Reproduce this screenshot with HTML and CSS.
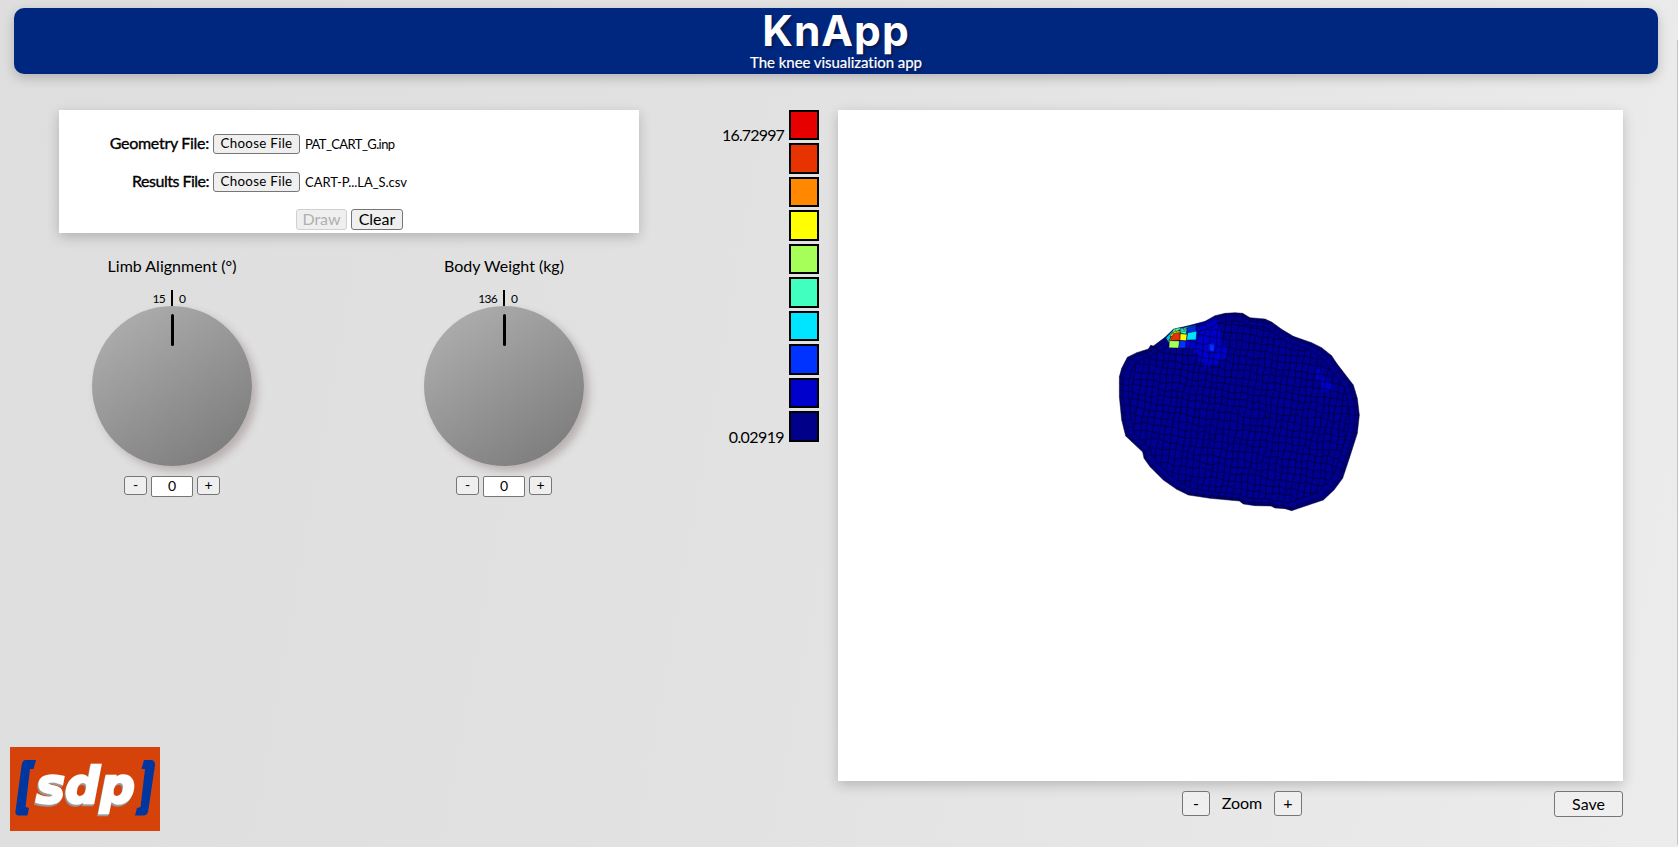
FILE: index.html
```html
<!DOCTYPE html>
<html lang="en">
<head>
<meta charset="utf-8">
<title>KnApp</title>
<link rel="stylesheet" href="styles.css">
</head>
<body>
<header class="header">
  <h1 class="title">KnApp</h1>
  <p class="subtitle">The knee visualization app</p>
</header>
<main class="main">
  <section class="controls">
    <form class="files">
      <div class="file-row"><label class="file-label label-a">Geometry File:</label><button type="button" class="btn choose">Choose File</button><span class="file-name name-a">PAT_CART_G.inp</span></div>
      <div class="file-row"><label class="file-label label-b">Results File:</label><button type="button" class="btn choose">Choose File</button><span class="file-name name-b">CART-P...LA_S.csv</span></div>
      <div class="actions"><button type="button" class="btn draw" disabled>Draw</button><button type="button" class="btn clear">Clear</button></div>
    </form>
    <div class="knobs">
      <div class="knob">
        <h2 class="knob-title">Limb Alignment (°)</h2>
        <div class="range"><span class="max">15</span><i class="tick"></i><span class="min">0</span></div>
        <div class="dial"><i class="pointer"></i></div>
        <div class="stepper"><button type="button" class="btn step">-</button><span class="value">0</span><button type="button" class="btn step">+</button></div>
      </div>
      <div class="knob">
        <h2 class="knob-title">Body Weight (kg)</h2>
        <div class="range"><span class="max">136</span><i class="tick"></i><span class="min">0</span></div>
        <div class="dial"><i class="pointer"></i></div>
        <div class="stepper"><button type="button" class="btn step">-</button><span class="value">0</span><button type="button" class="btn step">+</button></div>
      </div>
    </div>
  </section>
  <aside class="legend">
    <div class="bounds"><span class="upper">16.72997</span><span class="lower">0.02919</span></div>
    <div class="scale">
      <i class="swatch c1"></i><i class="swatch c2"></i><i class="swatch c3"></i><i class="swatch c4"></i><i class="swatch c5"></i><i class="swatch c6"></i><i class="swatch c7"></i><i class="swatch c8"></i><i class="swatch c9"></i><i class="swatch c10"></i>
    </div>
  </aside>
  <section class="viewer">
    <div class="canvas"><svg class="mesh" id="mesh" viewBox="0 0 780 660"></svg></div>
    <div class="toolbar"><button type="button" class="btn zoom">-</button><span class="zoom-label">Zoom</span><button type="button" class="btn zoom">+</button><button type="button" class="btn save">Save</button></div>
  </section>
</main>
<svg class="logo" viewBox="0 0 150 84">
  <rect width="150" height="84" fill="#d6430a"/>
  <path d="M15 13H26L23.5 22H20L15.500 60L19 61L17.500 68.500H8Q5 68 5.500 64L11.500 19Q12 14 15 13Z" fill="#0036a0"/>
  <path d="M134 13H142Q145 14 145 18L138.500 62Q138 68 134 68.500H125L127 61L130.500 60L135 22H131.500Z" fill="#0036a0"/>
  <text class="logo-shadow" x="25" y="57.500" textLength="99" lengthAdjust="spacingAndGlyphs">sdp</text>
  <text class="logo-text" x="26" y="56" textLength="99" lengthAdjust="spacingAndGlyphs">sdp</text>
</svg>
<i class="edge"></i>
<script src="mesh.js"></script>
</body>
</html>
```
FILE: styles.css
```css
* { box-sizing: border-box; }
html { height: 100%; }
body {
  margin: 0;
  padding: 8px 20px 0 14px;
  height: 847px;
  overflow: hidden;
  background: linear-gradient(100deg, #dedede 0%, #e2e2e2 48%, #ececec 100%);
  color: #000;
  font: 16px/20px Lato, sans-serif;
}
h1, h2, p { margin: 0; font-weight: 400; }
.header {
  height: 66px;
  border-radius: 10px;
  background: #002780;
  color: #fff;
  text-align: center;
  box-shadow: 0 4px 12px rgba(0, 0, 0, .2);
  text-shadow: 2px 2px 3px rgba(0, 0, 0, .35);
}
.title { font-family: Inter, sans-serif; font-size: 42.500px; line-height: 46px; font-weight: 700; letter-spacing: 1px; }
.subtitle { font-size: 15px; line-height: 16px; letter-spacing: -.05px; -webkit-text-stroke: .2px #fff; }
.main {
  display: grid;
  grid-template-columns: 580px 180px 785px;
  padding: 36px 0 0 45px;
}
.viewer { margin-left: 19px; width: 785px; }
.files {
  height: 123px;
  padding-top: 24px;
  background: #fff;
  box-shadow: 0 4px 12px rgba(0, 0, 0, .2);
}
.btn {
  padding: 0 0 1px;
  border: 1px solid #767676;
  border-radius: 3px;
  background: #efefef;
  color: #000;
  font: 16px/1 Lato, sans-serif;
}
.file-row { display: flex; align-items: center; height: 20px; margin-bottom: 18px; }
.file-label { width: 150px; margin-right: 4px; padding-bottom: 2px; text-align: right; -webkit-text-stroke: .35px #000; }
.label-a { letter-spacing: -.28px; }
.label-b { letter-spacing: -.5px; }
.choose { width: 87px; height: 20px; font-size: 13.330px; letter-spacing: .3px; }
.file-name { margin-left: 5px; padding-bottom: 1px; font-size: 13px; }
.name-a { letter-spacing: -.6px; }
.name-b { letter-spacing: -.05px; }
.actions { display: flex; gap: 4px; margin: -1px 0 0 237px; }
.draw { width: 51px; height: 21px; color: #b0b0b0; border-color: #d0d0d0; }
.clear { width: 52px; height: 21px; }
.knobs { display: flex; gap: 106px; padding-top: 23px; }
.knob { width: 226px; display: flex; flex-direction: column; align-items: center; }
.knob-title { font-size: 16px; line-height: 20px; }
.range { display: grid; grid-template-columns: 40px 2px 40px; column-gap: 6px; height: 14px; margin-top: 14px; font-size: 12px; line-height: 18px; }
.max { text-align: right; letter-spacing: -.7px; }
.tick { background: #000; }
.dial {
  width: 160px; height: 160px; margin-top: 2px; padding-top: 8px;
  border-radius: 50%;
  background: linear-gradient(145deg, #b3b3b3, #777);
  box-shadow: 5px 5px 9px #b9b0b0;
}
.pointer { display: block; width: 3px; height: 32px; margin: 0 auto; border-radius: 2px; background: #000; }
.stepper { display: flex; gap: 4px; margin-top: 10px; }
.step { width: 23px; height: 19px; font-size: 14px; }
.value { width: 42px; height: 21px; border: 1px solid #767676; border-radius: 2px; background: #fff; font-size: 14px; line-height: 18px; text-align: center; }
.legend { display: flex; justify-content: flex-end; gap: 5px; }
.bounds { display: flex; flex-direction: column; justify-content: space-between; height: 337px; padding-top: 15px; text-align: right; letter-spacing: -.85px; }
.lower { letter-spacing: -.6px; }
.scale { display: grid; grid-template-rows: repeat(10, 30.200px); row-gap: 3.300px; }
.swatch { width: 30px; border: 2px solid #000; }
.c1 { background: #e60000; }
.c2 { background: #e63300; }
.c3 { background: #ff8800; }
.c4 { background: #ffff00; }
.c5 { background: #a6ff59; }
.c6 { background: #40ffbf; }
.c7 { background: #00e5ff; }
.c8 { background: #0033ff; }
.c9 { background: #0000cc; }
.c10 { background: #000088; }
.canvas { height: 671px; padding: 190px 0 0 272px; background: #fff; box-shadow: 0 4px 12px rgba(0, 0, 0, .2); }
.mesh { display: block; width: 260px; height: 220px; }
.toolbar { display: flex; align-items: flex-start; padding: 10px 0 0 344px; }
.zoom { width: 28px; height: 25px; }
.zoom-label { width: 64px; line-height: 24px; text-align: center; }
.save { width: 69px; height: 26px; margin-left: auto; }
.logo { position: fixed; left: 10px; top: 747px; width: 150px; height: 84px; }
.logo-text, .logo-shadow { font: italic bold 50px "DejaVu Sans", sans-serif; fill: #fff; stroke: #fff; stroke-width: 2.500px; }
.logo-shadow { fill: #999; stroke: #999; }
.edge { position: fixed; right: 0; top: 40px; width: 1px; height: 805px; background: #bcc4d0; }
```
FILE: mesh.js
```js
// Cartilage surface mesh: outline, concentric rim layers and an inner quad grid.
const NS = "http://www.w3.org/2000/svg";
const svg = document.getElementById("mesh");
const outline = [[28,230],[35,205],[52,172],[80,158],[115,147],[122,136],[130,138],[165,112],[190,88],[240,76],[285,64],[315,47],[345,40],[375,38],[398,40],[420,53],[465,57],[485,66],[515,88],[550,109],[605,128],[635,143],[665,167],[680,190],[730,255],[742,295],[748,345],[742,400],[718,475],[698,535],[672,570],[640,600],[545,632],[525,626],[495,624],[483,618],[435,617],[400,612],[388,603],[300,595],[235,585],[200,568],[160,540],[120,500],[102,475],[98,456],[47,408],[35,360],[28,290]];
const cx = 385, cy = 345;
const scaled = k => outline.map(([x, y]) => [cx + (x - cx) * k, cy + (y - cy) * k]);
const closed = pts => "M" + pts.map(p => p.join(" ")).join("L") + "Z";
function add(parent, tag, attrs) {
  const el = document.createElementNS(NS, tag);
  for (const k in attrs) el.setAttribute(k, attrs[k]);
  parent.appendChild(el);
  return el;
}
let seed = 11;
const rnd = () => (seed = (seed * 16807) % 2147483647) / 2147483647 - 0.5;

add(svg, "path", { d: closed(outline), fill: "#000093" });
const fill = (points, color) => add(svg, "polygon", { points, fill: color });
fill("240,78 285,66 318,50 330,90 334,134 350,138 350,174 328,178 326,193 300,193 298,203 284,203 284,185 266,185 266,163 252,160 252,146 222,143 226,98", "#0000cc");
fill("298,130 313,132 311,154 296,150", "#0033ff");
fill("618,206 632,208 634,230 652,238 652,248 668,252 668,270 636,276 633,243 620,236", "#0000cc");

const clip = add(add(svg, "defs", {}), "clipPath", { id: "core" });
add(clip, "path", { d: closed(scaled(0.92)) });
const core = add(svg, "g", { "clip-path": "url(#core)" });
const a = 8 * Math.PI / 180, ca = Math.cos(a), sa = Math.sin(a);
const cols = 44, rows = 36, grid = [];
for (let j = 0; j <= rows; j++) {
  grid.push([]);
  for (let i = 0; i <= cols; i++) {
    const u = (i - cols / 2) * 19 + rnd() * 7;
    const v = (j - rows / 2) * 22 + rnd() * 11;
    grid[j].push([cx + u * ca - v * sa, cy + u * sa + v * ca]);
  }
}
let d = "";
for (let j = 0; j < rows; j++) for (let i = 0; i < cols; i++) {
  const p = grid[j][i], r = grid[j][i + 1], b = grid[j + 1][i];
  d += `M${p}L${r}M${p}L${b}`;
}
add(core, "path", { d, fill: "none", stroke: "#000", "stroke-width": 1.9, "stroke-opacity": 0.75 });

// Evenly spaced spokes join the outline to the inner grid.
const inner = scaled(0.92);
let spokes = "";
outline.forEach((p, i) => {
  const q = outline[(i + 1) % outline.length], m = inner[i], n = inner[(i + 1) % inner.length];
  const count = Math.max(1, Math.round(Math.hypot(q[0] - p[0], q[1] - p[1]) / 24));
  for (let s = 0; s < count; s++) {
    const t = s / count;
    spokes += `M${p[0] + (q[0] - p[0]) * t} ${p[1] + (q[1] - p[1]) * t}L${m[0] + (n[0] - m[0]) * t} ${m[1] + (n[1] - m[1]) * t}`;
  }
});
add(svg, "path", { d: spokes, fill: "none", stroke: "#000", "stroke-width": 2, "stroke-opacity": 0.6 });
[1, 0.984, 0.966, 0.92].forEach(k =>
  add(svg, "path", { d: closed(scaled(k)), fill: "none", stroke: "#000", "stroke-width": 1.9, "stroke-opacity": 0.7 }));

// High-stress elements near the upper-left rim.
const hot = [
  ["168,114 190,90 225,82 258,76 258,95 210,96 184,104 176,128", "#00e5ff"],
  ["190,88 212,82 210,90 186,101", "#40ffbf"],
  ["180,107 194,93 212,93 211,102 188,112", "#ffff00"],
  ["175,128 184,108 191,112 181,124", "#ff8800"],
  ["190,101 210,98 210,121 182,122", "#e63300"],
  ["211,101 231,103 229,122 210,121", "#ffff00"],
  ["233,98 260,94 258,119 230,120", "#00e5ff"],
  ["178,122 209,123 206,144 177,143", "#a6ff59"],
  ["209,122 228,123 226,144 206,144", "#0033ff"],
  ["210,88 228,83 229,102 211,100", "#40ffbf"],
  ["230,83 258,76 258,93 232,97", "#0033ff"]
];
hot.forEach(([points, color]) => add(svg, "polygon", { points, fill: color, stroke: "#000", "stroke-width": 1 }));
add(svg, "path", { d: "M168 120L188 98L224 88L282 73M172 124L192 101L258 86M195 88L200 98M206 85L211 98M220 83L223 94", fill: "none", stroke: "#000", "stroke-width": 1 });
```
